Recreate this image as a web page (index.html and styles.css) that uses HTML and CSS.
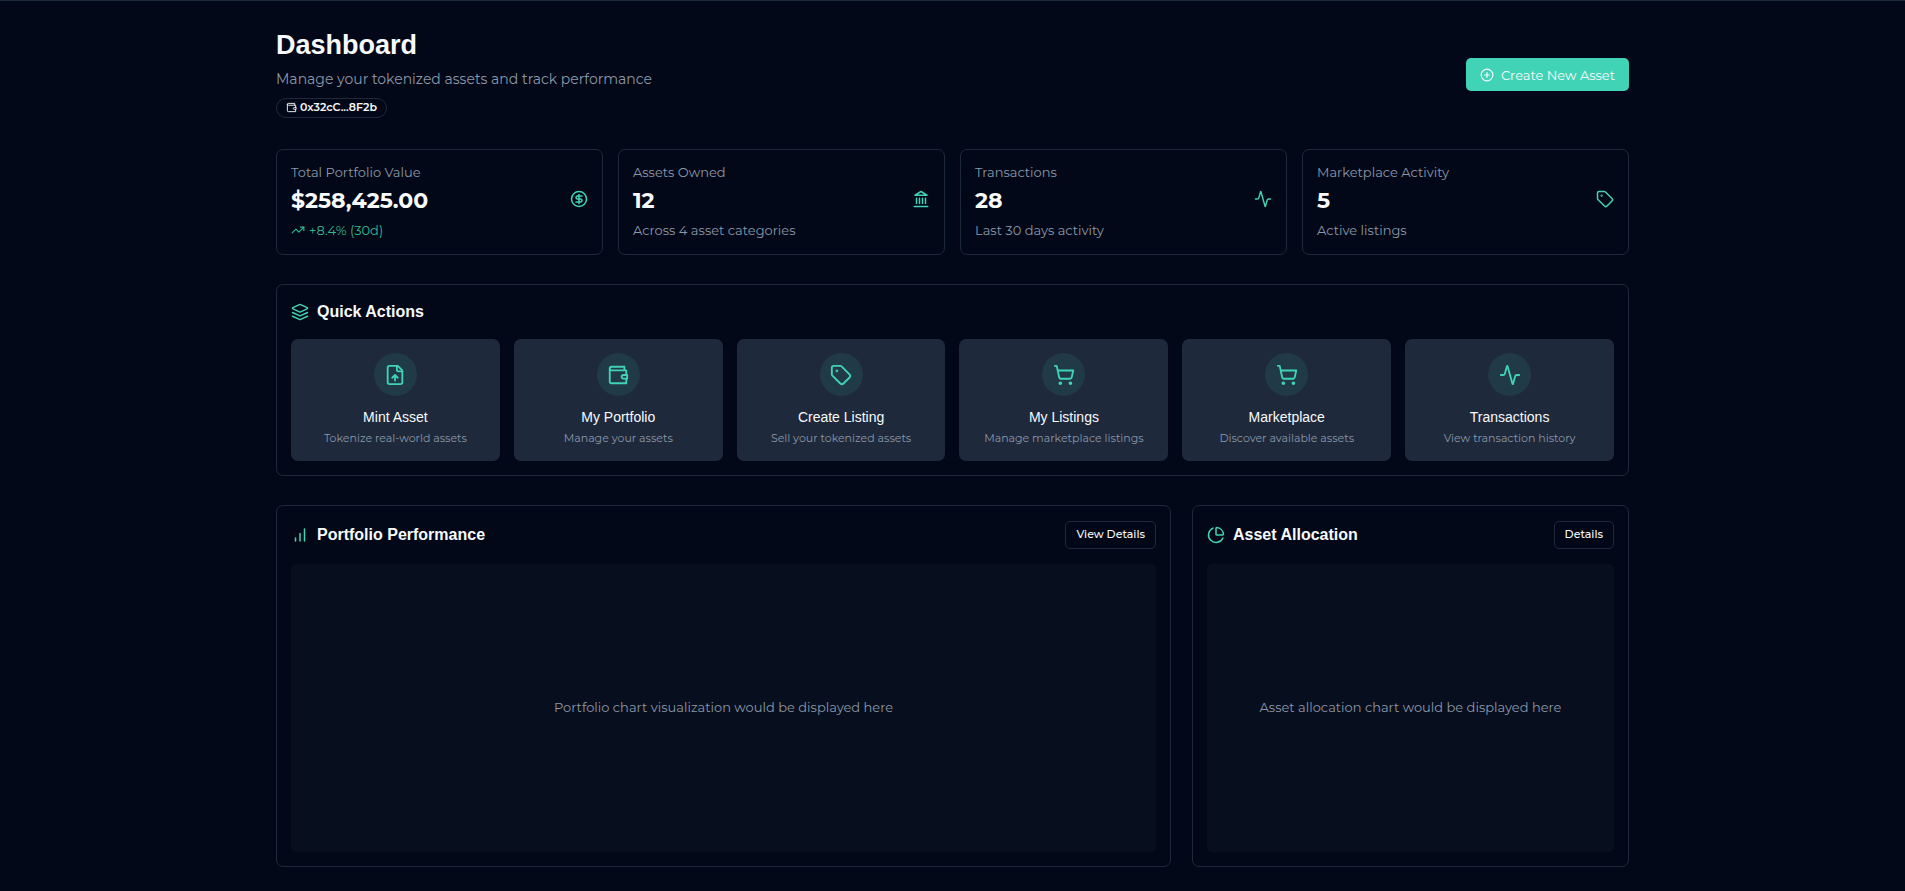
FILE: index.html
```html
<!DOCTYPE html>
<html lang="en">
<head>
<meta charset="utf-8">
<title>Dashboard</title>
<link rel="stylesheet" href="styles.css">
</head>
<body>
<svg class="sprite" aria-hidden="true">
  <symbol id="wallet" viewBox="0 0 24 24"><path d="M21 12V7H5a2 2 0 0 1 0-4h14v4"/><path d="M3 5v14a2 2 0 0 0 2 2h16v-5"/><path d="M18 12a2 2 0 0 0 0 4h4v-4Z"/></symbol>
  <symbol id="plus" viewBox="0 0 24 24"><circle cx="12" cy="12" r="10"/><path d="M8 12h8M12 8v8"/></symbol>
  <symbol id="dollar" viewBox="0 0 24 24"><circle cx="12" cy="12" r="10"/><path d="M16 8h-6a2 2 0 1 0 0 4h4a2 2 0 1 1 0 4H8"/><path d="M12 18V6"/></symbol>
  <symbol id="trend" viewBox="0 0 24 24"><path d="m22 7-8.500 8.500-5-5L2 17"/><path d="M16 7h6v6"/></symbol>
  <symbol id="landmark" viewBox="0 0 24 24"><path d="M3 22h18M6 18v-7M10 18v-7M14 18v-7M18 18v-7"/><path d="m12 2 8 5H4Z"/></symbol>
  <symbol id="activity" viewBox="0 0 24 24"><path d="M22 12h-2.480a2 2 0 0 0-1.930 1.460l-2.350 8.360a.25.25 0 0 1-.48 0L9.240 2.180a.25.25 0 0 0-.48 0l-2.350 8.360A2 2 0 0 1 4.490 12H2"/></symbol>
  <symbol id="tag" viewBox="0 0 24 24"><path d="M12.586 2.586A2 2 0 0 0 11.172 2H4a2 2 0 0 0-2 2v7.172a2 2 0 0 0 .586 1.414l8.704 8.704a2.426 2.426 0 0 0 3.420 0l6.580-6.580a2.426 2.426 0 0 0 0-3.420z"/><circle cx="7.500" cy="7.500" r=".5" fill="currentColor"/></symbol>
  <symbol id="layers" viewBox="0 0 24 24"><path d="m12.830 2.180a2 2 0 0 0-1.660 0L2.600 6.080a1 1 0 0 0 0 1.830l8.580 3.910a2 2 0 0 0 1.660 0l8.580-3.900a1 1 0 0 0 0-1.830Z"/><path d="m22 17.650-9.170 4.160a2 2 0 0 1-1.660 0L2 17.650"/><path d="m22 12.650-9.170 4.160a2 2 0 0 1-1.660 0L2 12.650"/></symbol>
  <symbol id="file" viewBox="0 0 24 24"><path d="M15 2H6a2 2 0 0 0-2 2v16a2 2 0 0 0 2 2h12a2 2 0 0 0 2-2V7Z"/><path d="M14 2v4a2 2 0 0 0 2 2h4"/><path d="M12 12v6M15 15l-3-3-3 3"/></symbol>
  <symbol id="cart" viewBox="0 0 24 24"><circle cx="8" cy="21" r="1"/><circle cx="19" cy="21" r="1"/><path d="M2.050 2.050h2l2.660 12.420a2 2 0 0 0 2 1.580h9.780a2 2 0 0 0 1.950-1.570l1.650-7.430H5.120"/></symbol>
  <symbol id="bars" viewBox="0 0 24 24"><path d="M12 20V10M18 20V4M6 20v-4"/></symbol>
  <symbol id="pie" viewBox="0 0 24 24"><path d="M21 12c.552 0 1.005-.449.95-.998a10 10 0 0 0-8.953-8.951c-.55-.055-.998.398-.998.950v8a1 1 0 0 0 1 1z"/><path d="M21.210 15.890A10 10 0 1 1 8 2.830"/></symbol>
</svg>
<main class="page">
  <div class="container">
    <header class="header">
      <div class="intro">
        <h1>Dashboard</h1>
        <p class="subtitle">Manage your tokenized assets and track performance</p>
        <div class="badge"><svg class="icon icon-xs"><use href="#wallet"/></svg>0x32cC...8F2b</div>
      </div>
      <button class="primary"><svg class="icon icon-sm"><use href="#plus"/></svg>Create New Asset</button>
    </header>

    <section class="stats" aria-label="Summary">
      <article class="card stat">
        <div><p class="label">Total Portfolio Value</p><p class="value">$258,425.00</p><p class="note up"><svg class="icon icon-sm"><use href="#trend"/></svg>+8.4% (30d)</p></div>
        <svg class="icon"><use href="#dollar"/></svg>
      </article>
      <article class="card stat">
        <div><p class="label">Assets Owned</p><p class="value">12</p><p class="note">Across 4 asset categories</p></div>
        <svg class="icon"><use href="#landmark"/></svg>
      </article>
      <article class="card stat">
        <div><p class="label">Transactions</p><p class="value">28</p><p class="note">Last 30 days activity</p></div>
        <svg class="icon"><use href="#activity"/></svg>
      </article>
      <article class="card stat">
        <div><p class="label">Marketplace Activity</p><p class="value">5</p><p class="note">Active listings</p></div>
        <svg class="icon"><use href="#tag"/></svg>
      </article>
    </section>

    <section class="card quick">
      <h2><svg class="icon"><use href="#layers"/></svg>Quick Actions</h2>
      <div class="tiles">
        <a class="tile" href="#mint"><span class="disc"><svg class="icon icon-lg"><use href="#file"/></svg></span><h3>Mint Asset</h3><p>Tokenize real-world assets</p></a>
        <a class="tile" href="#portfolio"><span class="disc"><svg class="icon icon-lg"><use href="#wallet"/></svg></span><h3>My Portfolio</h3><p>Manage your assets</p></a>
        <a class="tile" href="#create"><span class="disc"><svg class="icon icon-lg"><use href="#tag"/></svg></span><h3>Create Listing</h3><p>Sell your tokenized assets</p></a>
        <a class="tile" href="#listings"><span class="disc"><svg class="icon icon-lg"><use href="#cart"/></svg></span><h3>My Listings</h3><p>Manage marketplace listings</p></a>
        <a class="tile" href="#market"><span class="disc"><svg class="icon icon-lg"><use href="#cart"/></svg></span><h3>Marketplace</h3><p>Discover available assets</p></a>
        <a class="tile" href="#history"><span class="disc"><svg class="icon icon-lg"><use href="#activity"/></svg></span><h3>Transactions</h3><p>View transaction history</p></a>
      </div>
    </section>

    <div class="charts">
      <section class="card">
        <div class="card-head"><h2><svg class="icon"><use href="#bars"/></svg>Portfolio Performance</h2><button class="outline">View Details</button></div>
        <div class="chart">Portfolio chart visualization would be displayed here</div>
      </section>
      <section class="card">
        <div class="card-head"><h2><svg class="icon"><use href="#pie"/></svg>Asset Allocation</h2><button class="outline">Details</button></div>
        <div class="chart">Asset allocation chart would be displayed here</div>
      </section>
    </div>
  </div>
</main>
</body>
</html>
```
FILE: styles.css
```css
:root {
  --bg: #020817;
  --line: #1e293b;
  --text: #f8fafc;
  --muted: #8b98aa;
  --accent: #40d3b5;
  --body: Montserrat, Inter, "Open Sans", sans-serif;
  --head: "Liberation Sans", Arial, sans-serif;
}
* { box-sizing: border-box; margin: 0; }
body {
  background: var(--bg);
  color: var(--text);
  font-family: var(--body);
  font-size: 13px;
  line-height: 16px;
}
.sprite { display: none; }
.icon {
  width: 18px;
  height: 18px;
  flex: none;
  fill: none;
  stroke: currentColor;
  stroke-width: 2;
  stroke-linecap: round;
  stroke-linejoin: round;
  color: var(--accent);
}
.icon-xs { width: 11px; height: 11px; color: var(--text); }
.icon-sm { width: 14px; height: 14px; color: inherit; }
.icon-lg { width: 22px; height: 22px; }
.page { border-top: 1px solid var(--line); padding: 28px 24px 24px; }
.container { max-width: 1353px; margin: 0 auto; }
.header {
  display: flex;
  justify-content: space-between;
  align-items: center;
  margin-bottom: 29px;
}
.intro { padding-bottom: 2px; }
h1 { font: bold 27px/32px var(--head); }
.subtitle { margin-top: 7px; font-size: 14px; line-height: 22px; color: var(--muted); }
.badge {
  display: inline-flex;
  align-items: center;
  gap: 3px;
  margin-top: 8px;
  padding: 0 9px 2px;
  border: 1px solid var(--line);
  border-radius: 10px;
  font-size: 11px;
  font-weight: 600;
  line-height: 16px;
  vertical-align: top;
}
button { font-family: var(--body); cursor: pointer; }
.primary {
  display: flex;
  align-items: center;
  gap: 7px;
  height: 33px;
  padding: 0 14px;
  border: 0;
  border-radius: 5px;
  background: var(--accent);
  color: var(--text);
  font-size: 13px;
  font-weight: 400;
}
.card { border: 1px solid var(--line); border-radius: 7px; padding: 14px; }
.stats {
  display: grid;
  grid-template-columns: repeat(4, 1fr);
  gap: 15px;
  margin-bottom: 29px;
}
.stat { display: flex; justify-content: space-between; align-items: center; padding-bottom: 16px; }
.stat > .icon { margin-bottom: 4px; }
.label, .note { color: var(--muted); }
.value { margin: 6px 0 7px; font-size: 22px; font-weight: 700; line-height: 29px; }
.note { display: flex; align-items: center; gap: 4px; }
.up { color: #34b98f; }
.quick { margin-bottom: 29px; }
h2 {
  display: flex;
  align-items: center;
  gap: 8px;
  font: bold 16px/25px var(--head);
}
.tiles {
  display: grid;
  grid-template-columns: repeat(6, 1fr);
  gap: 14px;
  margin-top: 15px;
}
.tile {
  display: flex;
  flex-direction: column;
  align-items: center;
  padding: 14px 14px 15px;
  border-radius: 7px;
  background: var(--line);
  color: var(--text);
  text-align: center;
  text-decoration: none;
}
.disc {
  display: grid;
  place-items: center;
  width: 43px;
  height: 43px;
  margin-bottom: 11px;
  border-radius: 50%;
  background: #213a47;
}
h3 { font: 14px/20px var(--head); }
.tile p { margin-top: 3px; font-size: 11px; line-height: 16px; color: var(--muted); }
.charts { display: grid; grid-template-columns: 895fr 437fr; gap: 21px; }
.card-head { display: flex; justify-content: space-between; align-items: center; min-height: 29px; }
.outline {
  height: 28px;
  padding: 0 10px 1px;
  border: 1px solid var(--line);
  border-radius: 5px;
  background: transparent;
  color: var(--text);
  font-size: 11px;
  font-weight: 500;
}
.chart {
  display: grid;
  place-items: center;
  min-height: 288px;
  margin-top: 15px;
  padding-bottom: 2px;
  border-radius: 5px;
  background: #070e1d;
  color: var(--muted);
}
```
